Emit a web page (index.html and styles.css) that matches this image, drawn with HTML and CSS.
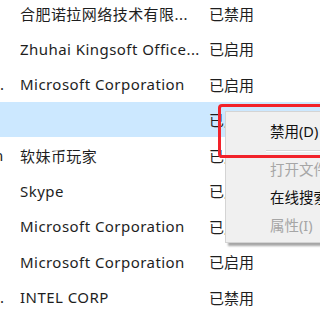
FILE: index.html
```html
<!DOCTYPE html>
<html lang="zh-CN">

<head>
  <meta charset="UTF-8">
  <meta name="viewport" content="width=device-width, initial-scale=1">
  <title>启动项</title>
  <link rel="stylesheet" href="styles.css">
</head>

<body>

  <div class="list">
    <div class="row"><span class="edge"></span><span class="pub">合肥诺拉网络技术有限...</span><span class="state">已禁用</span></div>
    <div class="row"><span class="edge"></span><span class="pub">Zhuhai Kingsoft Office...</span><span class="state">已启用</span></div>
    <div class="row"><span class="edge">.</span><span class="pub">Microsoft Corporation</span><span class="state">已启用</span></div>
    <div class="row selected"><span class="edge"></span><span class="pub"></span><span class="state">已启用</span></div>
    <div class="row"><span class="edge"><span class="cut">n</span></span><span class="pub">软妹币玩家</span><span class="state">已启用</span></div>
    <div class="row"><span class="edge"></span><span class="pub">Skype</span><span class="state">已启用</span></div>
    <div class="row"><span class="edge"></span><span class="pub">Microsoft Corporation</span><span class="state">已启用</span></div>
    <div class="row"><span class="edge"></span><span class="pub">Microsoft Corporation</span><span class="state">已启用</span></div>
    <div class="row"><span class="edge">.</span><span class="pub">INTEL CORP</span><span class="state">已禁用</span></div>
  </div>

  <!-- right-click menu -->
  <div class="menu">
    <div class="item">禁用(D)</div>
    <div class="sep"></div>
    <div class="item off">打开文件位置(O)</div>
    <div class="item">在线搜索(S)</div>
    <div class="item off">属性(I)</div>
  </div>

  <!-- annotation -->
  <div class="mark"></div>

</body>

</html>
```

FILE: styles.css
```css
body {
  margin: 0;
  width: 320px;
  height: 320px;
  overflow: hidden;
  position: relative;
  background: #fff;
  font-family: "Noto Sans", "Noto Sans CJK SC", sans-serif;
  font-size: 15px;
  color: #1e1e1e;
}

.list {
  margin-top: -4.75px;
}

.row {
  display: grid;
  grid-template-columns: 20px 189px 1fr;
  height: 35.5px;
  align-items: center;
  white-space: nowrap;
}

.row.selected {
  background: #cce8ff;
}

.edge {
  overflow: hidden;
}

.edge .cut {
  display: inline-block;
  margin-left: -6px;
}

.pub {
  overflow: hidden;
  letter-spacing: 0.45px;
}

.state {
  overflow: hidden;
}

/* context menu */
.menu {
  position: absolute;
  left: 225px;
  top: 111px;
  width: 120px;
  padding: 5px 0 3px;
  background: #f0f0f0;
  border: 1px solid #d4d4d4;
  box-shadow: 3px 3px 2px rgba(0, 0, 0, 0.35);
  font-size: 14.5px;
  white-space: nowrap;
}

.item {
  height: 28px;
  line-height: 28px;
  padding-left: 44px;
  color: #111;
}

.item.off {
  color: #a6a6a6;
}

.sep {
  height: 10px;
  margin-left: 40px;
  position: relative;
}

.sep::after {
  content: "";
  position: absolute;
  left: 0;
  right: 0;
  top: 5px;
  border-top: 1px solid #d7d7d7;
  border-bottom: 1px solid #fff;
}

.mark {
  position: absolute;
  left: 218px;
  top: 104px;
  width: 120px;
  height: 48px;
  border: 3px solid #f2222a;
  border-radius: 4px;
}
```
